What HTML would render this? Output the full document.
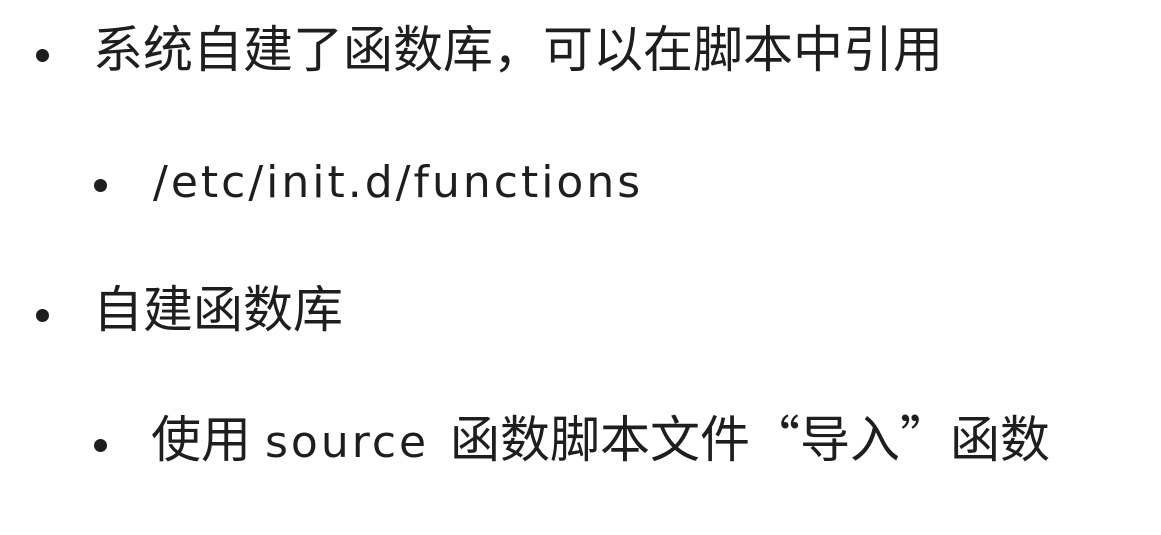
<!DOCTYPE html>
<html><head><meta charset="utf-8"><style>
html,body{margin:0;padding:0;background:#fff;width:1161px;height:535px;overflow:hidden}
.t{position:absolute;font-family:"Noto Sans CJK SC",sans-serif;font-size:50px;color:#1e1e1e;line-height:60px;white-space:pre}
.l{font-family:"DejaVu Sans",sans-serif;font-size:44px;letter-spacing:3px}
.b{position:absolute;width:13px;height:13px;border-radius:50%;background:#1e1e1e}
</style></head><body>
<div class="b" style="left:36px;top:49px"></div>
<div class="t" style="left:93px;top:16px">系统自建了函数库，可以在脚本中引用</div>
<div class="b" style="left:94px;top:179px"></div>
<div class="t l" style="left:153px;top:153px">/etc/init.d/functions</div>
<div class="b" style="left:36px;top:309px"></div>
<div class="t" style="left:93px;top:276px">自建函数库</div>
<div class="b" style="left:94px;top:439px"></div>
<div class="t" style="left:151px;top:406px">使用</div>
<div class="t l" style="left:265px;top:413px">source</div>
<div class="t" style="left:450px;top:406px">函数脚本文件“导入”函数</div>
</body></html>
